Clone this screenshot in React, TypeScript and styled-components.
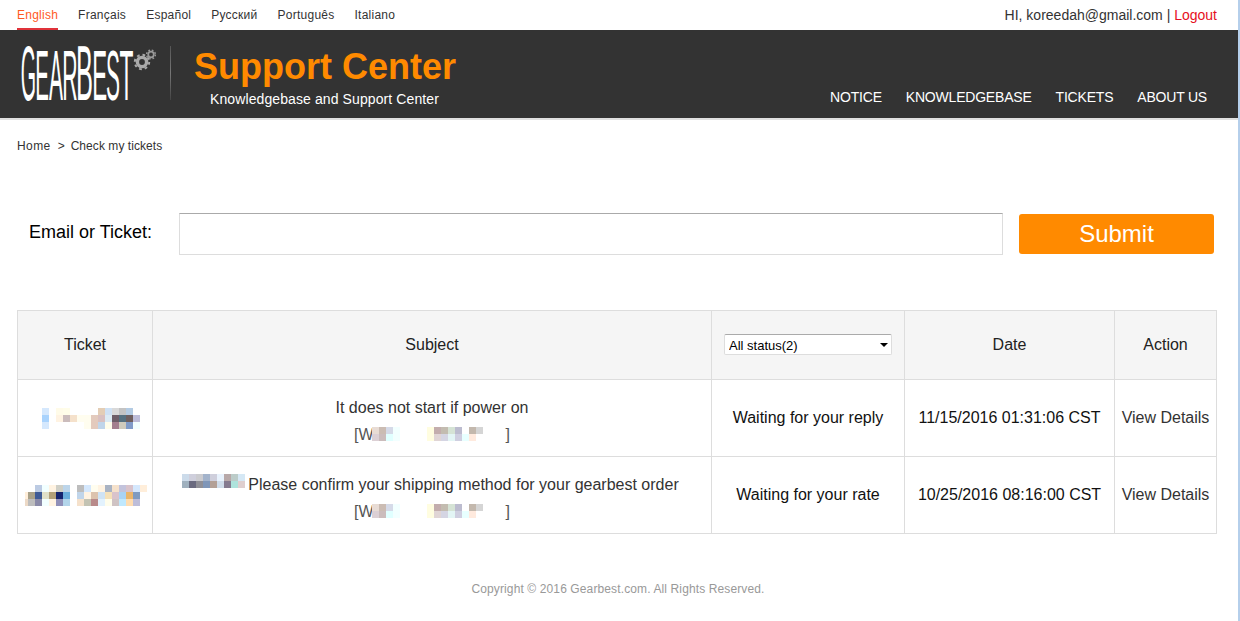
import React from "react";
import styled, { createGlobalStyle } from "styled-components";

const Global = createGlobalStyle`
  html, body { margin: 0; padding: 0; background: #fff; }
  body { font-family: "Liberation Sans", Arial, sans-serif; color: #333; }
  * { box-sizing: border-box; }
`;

const Page = styled.div`
  width: 1240px;
  height: 621px;
  overflow: hidden;
  border-right: 2px solid #b5cfeb;
`;

const TopBar = styled.div`
  height: 30px;
  display: flex;
  justify-content: space-between;
  padding: 0 21px 0 17px;
`;
const Langs = styled.div`
  display: flex;
  gap: 20px;
`;
const Lang = styled.a<{ $active?: boolean }>`
  font-size: 12px;
  letter-spacing: 0.25px;
  line-height: 30px;
  height: 30px;
  color: ${(p) => (p.$active ? "#ff5a1e" : "#333")};
  border-bottom: 2px solid ${(p) => (p.$active ? "#e0323a" : "transparent")};
`;
const Account = styled.div`
  font-size: 14px;
  line-height: 30px;
  color: #333;
`;
const Logout = styled.a`
  color: #e60f23;
`;

const Header = styled.header`
  height: 90px;
  background: #333;
  border-bottom: 2px solid #e0e0e0;
  display: flex;
  padding: 0 31px 0 20px;
`;
const Logo = styled.svg`
  width: 152px;
  height: 88px;
  flex: none;
`;
const Brand = styled.div`
  margin-left: 22px;
  padding-top: 16px;
`;
const Title = styled.div`
  font-size: 36px;
  font-weight: 700;
  line-height: 41px;
  color: #ff8a00;
`;
const Subtitle = styled.div`
  font-size: 14px;
  letter-spacing: 0.1px;
  line-height: 16px;
  margin: 4px 0 0 16px;
  color: #fff;
`;
const Nav = styled.nav`
  margin-left: auto;
  display: flex;
  gap: 24px;
  padding-top: 59px;
`;
const NavItem = styled.a`
  font-size: 14px;
  letter-spacing: -0.2px;
  line-height: 16px;
  color: #fff;
`;

const Crumbs = styled.div`
  padding: 19px 0 0 17px;
  font-size: 12px;
  line-height: 14px;
  color: #333;
  display: flex;
`;
const Crumb = styled.span`
  letter-spacing: 0.06px;
`;
const HomeCrumb = styled.span`
  letter-spacing: 0.4px;
`;
const CrumbSep = styled.span`
  margin: 0 6px 0 7px;
`;

const SearchForm = styled.form`
  margin-top: 60px;
  display: flex;
  align-items: center;
  padding-left: 29px;
`;
const Label = styled.label`
  width: 150px;
  font-size: 18px;
  line-height: 20px;
  margin-top: -4px;
  color: #000;
`;
const TextInput = styled.input`
  width: 824px;
  height: 42px;
  border: 1px solid #ddd;
  border-top-color: #aaa;
  background: #fff;
`;
const Submit = styled.button`
  width: 195px;
  height: 40px;
  margin-left: 16px;
  border: 0;
  border-radius: 3px;
  background: #ff8a00;
  color: #fff;
  font-family: inherit;
  font-size: 24px;
`;

const Table = styled.table`
  margin: 55px 0 0 17px;
  width: 1199px;
  table-layout: fixed;
  border-collapse: collapse;
  font-size: 16px;
  color: #333;
`;
const HeadCell = styled.th`
  height: 69px;
  padding: 0;
  font-weight: 400;
  color: #222;
  background: #f5f5f5;
  border: 1px solid #ddd;
  text-align: center;
  vertical-align: middle;
`;
const Cell = styled.td`
  height: 77px;
  padding: 0;
  border: 1px solid #ddd;
  text-align: center;
  vertical-align: middle;
`;
const DarkCell = styled(Cell)`
  color: #111;
`;
const SubjectLines = styled.div`
  padding-top: 5px;
  line-height: 27px;
`;
const SubjectLine = styled.div`
  display: flex;
  justify-content: center;
  align-items: center;
  height: 27px;
`;
const OffsetLine = styled(SubjectLine)`
  padding-right: 3px;
`;
const OrderNo = styled(SubjectLine)`
  color: #555;
`;
const Mosaic = styled.svg`
  display: block;
  flex: none;
`;
const CenterMosaic = styled(Mosaic)`
  margin: 0 auto;
`;
const OrderMosaic = styled(Mosaic)`
  margin-left: -2px;
`;
const LeadMosaic = styled(Mosaic)`
  margin: -6px 3px 0 0;
`;

const SelectWrap = styled.div`
  position: relative;
  width: 168px;
  height: 21px;
  margin: -2px auto 0;
`;
const StatusSelect = styled.select`
  appearance: none;
  width: 100%;
  height: 100%;
  padding: 3px 0 0 4px;
  border: 1px solid #ddd;
  border-top-color: #aaa;
  border-radius: 2px;
  background: #fff;
  color: #000;
  font-family: "Liberation Sans", Arial, sans-serif;
  font-size: 13px;
`;
const Caret = styled.span`
  position: absolute;
  right: 4px;
  top: 9px;
  border-left: 4px solid transparent;
  border-right: 4px solid transparent;
  border-top: 4px solid #000;
  pointer-events: none;
`;

const Footer = styled.footer`
  margin-top: 48px;
  text-align: center;
  font-size: 12px;
  letter-spacing: 0.12px;
  line-height: 14px;
  color: #999;
  width: 1236px;
`;

type Px = [number, number, string, number?];

const Blocks = ({ cells }: { cells: Px[] }) => (
  <>
    {cells.map(([x, y, c, w], i) => (
      <rect key={i} x={x} y={y} width={w ?? 7} height={7} fill={c} />
    ))}
  </>
);

const row = (y: number, start: number, colours: (string | null)[]): Px[] =>
  colours.flatMap((c, i) => (c ? ([[start + i * 7, y, c]] as Px[]) : []));

const ticketA: Px[] = [
  ...row(0, 13, ["#d5e8fd", null, "#fffbe8", "#fffde9", null, null, null, null, "#e3cdb5", "#cfe1f4", "#d9d9d9", "#c3c3c3", "#b3cbe3"]),
  ...row(7, 13, ["#a9d3fd", null, "#fff3e2", "#cbbcbc", "#f5e1cb", "#fffdef", "#fffdef", "#e3cabd", "#d9c0c0", "#dcebf4", "#6e5e68", "#557080", "#6e5f5f", "#bdbdd9"]),
  ...row(14, 13, ["#d5e8fd", null, null, null, null, null, "#fffdef", "#e3cabd", "#c0d5ea", "#fffdeb", "#a47f8f", "#cfcbbd", "#7f9bc9", "#f2ffff"]),
];

const ticketB: Px[] = [
  ...row(0, 5, [null, "#bccbe3", "#f2ffff", "#fff3e2", "#cfcfc6", "#bcd5ea", null, "#bdbdbd", "#d5e8fd", "#fffdef", "#fff3e2", "#a9b3c3", "#f5e1cb", "#c3c3dc", "#d9c3cb", "#d5e8fd", "#ffeeda"]),
  [2, 7, "#ffeeda", 3],
  ...row(7, 5, ["#a8a088", "#3d5a96", "#e0e0c8", "#b3a078", "#15246e", "#6aaedc", null, "#c0d5ea", "#fff3e2", "#dcc3ad", "#cfe3f4", "#f5e1b8", "#d9c3cb", "#a9d3f5", "#ebb56a", "#7f9bc0"]),
  [2, 14, "#ecd9c6", 3],
  ...row(14, 5, ["#bdbdbd", "#8a8aa8", "#f2ffff", "#fff3e2", "#8f8fb8", "#b3d5ea", null, "#f5e1cb", "#c3c3b3", "#b88a8a", "#e3f2fd", "#fffdeb", "#cfc3c3", "#c0e8fd", "#fedcb0", "#bdbdd9"]),
];

const lead: Px[] = [
  ...row(0, 0, ["#ccdbea", "#cfcfdc", "#cbcbcf", "#a3b3cb", "#cfcfdc", "#e8f2fd", "#b8a8a8", "#bcccc9", "#d5e8f5"]),
  ...row(7, 0, ["#9fb0be", "#6a6a7f", "#8f8f96", "#7f96b8", "#b3a096", "#cfdcea", "#857a8f", "#aee3dc", "#dfcfcf"]),
];

const order: Px[] = [
  ...row(0, 0, ["#e8dcd5", "#cbbcb3", "#d5dae8", "#f2ffff"]),
  ...row(7, 0, ["#dcd0d5", "#cbbcbc", "#e0ffff", "#f2ffff"]),
  ...row(0, 55, ["#fffde0", "#c3adad", "#c3bcb0", "#d5e3d5", "#bcbccf", null, "#c3b8ad", "#d5d5d5"]),
  ...row(7, 55, ["#fffde0", "#e0d5d5", "#d5d5e3", "#e3f5f5", "#cfcfe0", "#e8ffff", "#ffeade"]),
];

const OrderNumber = () => (
  <OrderNo>
    [W
    <OrderMosaic width={134} height={14} aria-hidden="true">
      <Blocks cells={order} />
    </OrderMosaic>
    ]
  </OrderNo>
);

const letterStyle = {
  fontFamily: "'Liberation Sans', Arial, sans-serif",
  fill: "#fff",
};

const Letter = ({ x, sx, sy, ch }: { x: number; sx: number; sy: number; ch: string }) => (
  <text transform={`translate(${x} 70) scale(${sx} ${sy})`} fontSize="41">
    {ch}
  </text>
);

const LogoMark = () => (
  <Logo viewBox="0 0 152 88" role="img" aria-label="GearBest">
    <defs>
      <linearGradient id="rule" x1="0" y1="0" x2="0" y2="1">
        <stop offset="0" stopColor="#555" />
        <stop offset="0.5" stopColor="#777" />
        <stop offset="1" stopColor="#444" />
      </linearGradient>
    </defs>
    <g style={letterStyle}>
      <Letter x={0.74} sx={0.48} sy={1.92} ch="G" />
      <Letter x={15.35} sx={0.5} sy={1.72} ch="E" />
      <Letter x={29} sx={0.51} sy={1.72} ch="A" />
      <Letter x={42.3} sx={0.52} sy={1.72} ch="R" />
      <Letter x={56} sx={0.62} sy={1.92} ch="B" />
      <Letter x={72.2} sx={0.545} sy={1.72} ch="E" />
      <Letter x={86.1} sx={0.51} sy={1.72} ch="S" />
      <Letter x={99.6} sx={0.555} sy={1.72} ch="T" />
    </g>
    <circle cx="122" cy="32" r="4.6" fill="none" stroke="#aaa" strokeWidth="3.4" />
    <circle cx="122" cy="32" r="7.2" fill="none" stroke="#aaa" strokeWidth="2" strokeDasharray="2.8 2.9" />
    <circle cx="131" cy="24.5" r="2.8" fill="none" stroke="#999" strokeWidth="1.8" />
    <circle cx="131" cy="24.5" r="4.4" fill="none" stroke="#999" strokeWidth="1.4" strokeDasharray="1.7 1.8" />
    <rect x="150" y="16" width="1" height="54" fill="url(#rule)" />
  </Logo>
);

export default function App() {
  return (
    <Page>
      <Global />
      <TopBar>
        <Langs>
          <Lang $active>English</Lang>
          <Lang>Français</Lang>
          <Lang>Español</Lang>
          <Lang>Русский</Lang>
          <Lang>Português</Lang>
          <Lang>Italiano</Lang>
        </Langs>
        <Account>
          HI, koreedah@gmail.com | <Logout>Logout</Logout>
        </Account>
      </TopBar>
      <Header>
        <LogoMark />
        <Brand>
          <Title>Support Center</Title>
          <Subtitle>Knowledgebase and Support Center</Subtitle>
        </Brand>
        <Nav>
          <NavItem>NOTICE</NavItem>
          <NavItem>KNOWLEDGEBASE</NavItem>
          <NavItem>TICKETS</NavItem>
          <NavItem>ABOUT US</NavItem>
        </Nav>
      </Header>
      <Crumbs>
        <HomeCrumb>Home</HomeCrumb>
        <CrumbSep>&gt;</CrumbSep>
        <Crumb>Check my tickets</Crumb>
      </Crumbs>
      <SearchForm onSubmit={(e) => e.preventDefault()}>
        <Label>Email or Ticket:</Label>
        <TextInput />
        <Submit>Submit</Submit>
      </SearchForm>
      <Table>
        <colgroup>
          <col width={135} />
          <col width={559} />
          <col width={193} />
          <col width={210} />
          <col width={102} />
        </colgroup>
        <thead>
          <tr>
            <HeadCell>Ticket</HeadCell>
            <HeadCell>Subject</HeadCell>
            <HeadCell>
              <SelectWrap>
                <StatusSelect defaultValue="all">
                  <option value="all">All status(2)</option>
                </StatusSelect>
                <Caret />
              </SelectWrap>
            </HeadCell>
            <HeadCell>Date</HeadCell>
            <HeadCell>Action</HeadCell>
          </tr>
        </thead>
        <tbody>
          <tr>
            <Cell>
              <CenterMosaic width={113} height={21} aria-hidden="true">
                <Blocks cells={ticketA} />
              </CenterMosaic>
            </Cell>
            <Cell>
              <SubjectLines>
                <SubjectLine>It does not start if power on</SubjectLine>
                <OrderNumber />
              </SubjectLines>
            </Cell>
            <DarkCell>Waiting for your reply</DarkCell>
            <DarkCell>11/15/2016 01:31:06 CST</DarkCell>
            <Cell>View Details</Cell>
          </tr>
          <tr>
            <Cell>
              <CenterMosaic width={124} height={21} aria-hidden="true">
                <Blocks cells={ticketB} />
              </CenterMosaic>
            </Cell>
            <Cell>
              <SubjectLines>
                <OffsetLine>
                  <LeadMosaic width={63} height={14} aria-hidden="true">
                    <Blocks cells={lead} />
                  </LeadMosaic>
                  Please confirm your shipping method for your gearbest order
                </OffsetLine>
                <OrderNumber />
              </SubjectLines>
            </Cell>
            <DarkCell>Waiting for your rate</DarkCell>
            <DarkCell>10/25/2016 08:16:00 CST</DarkCell>
            <Cell>View Details</Cell>
          </tr>
        </tbody>
      </Table>
      <Footer>Copyright © 2016 Gearbest.com. All Rights Reserved.</Footer>
    </Page>
  );
}
